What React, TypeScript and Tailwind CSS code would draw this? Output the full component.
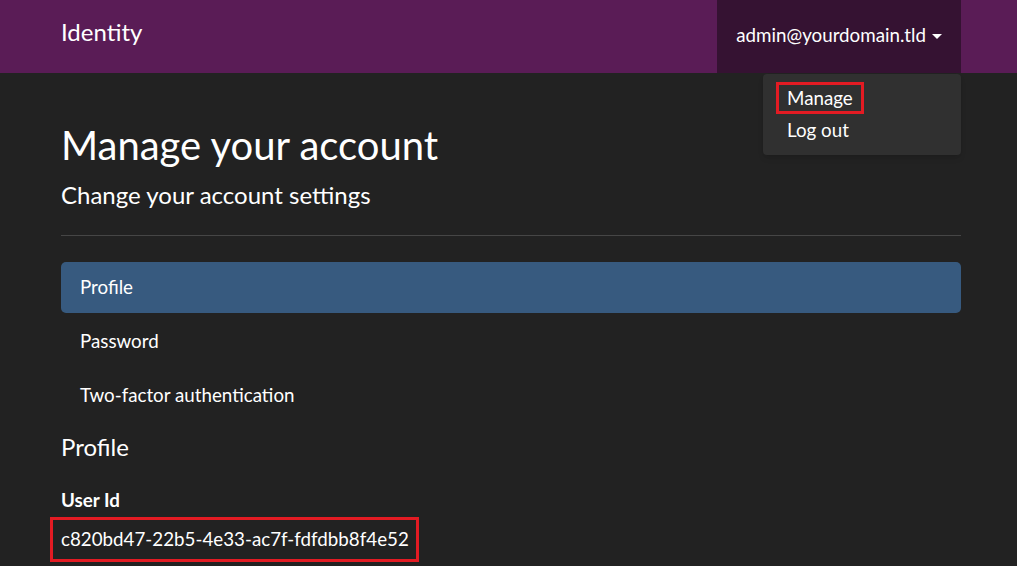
import React from "react";

export default function App() {
  return (
    <div className="min-h-[566px] bg-[#222222] text-white" style={{ fontFamily: "Lato, 'Noto Sans', sans-serif" }}>
      <nav className="h-[73px] bg-[#5a1c56] flex items-center relative">
        <div className="ml-[61px] w-[900px] flex items-center justify-between h-full">
          <span className="text-[24px] leading-none pb-[9px]">Identity</span>
          <div className="relative h-full">
            <div className="h-full bg-[#351232] flex items-center px-[19px] text-[18.75px] pb-[3px]">
              <span>admin@yourdomain.tld</span>
              <span className="ml-[6px] inline-block w-0 h-0 border-l-[5px] border-r-[5px] border-t-[5px] border-l-transparent border-r-transparent border-t-white mt-[2px]"></span>
            </div>
            <div className="absolute right-0 top-[74px] w-[198px] h-[81px] bg-[#303030] rounded-[4px] shadow-md pt-[8px] text-[18.75px]">
              <div className="ml-[13px] w-[88px] h-[32px] border-[3px] border-[#e31b23] flex items-center pl-[8px] leading-none">Manage</div>
              <div className="ml-[24px] mt-[4px] leading-[24px]">Log out</div>
            </div>
          </div>
        </div>
      </nav>
      <main className="ml-[61px] w-[900px]">
        <h1 className="text-[40px] leading-none mt-[52px]">Manage your account</h1>
        <h2 className="text-[24px] leading-none mt-[18px]">Change your account settings</h2>
        <hr className="border-0 border-t border-[#464646] mt-[28px]" />
        <ul className="mt-[26px] flex flex-col gap-[3px]">
          <li className="h-[51px] bg-[#375a7f] rounded-[5px] flex items-center px-[19px] text-[18.75px]">Profile</li>
          <li className="h-[51px] flex items-center px-[19px] text-[18.75px]">Password</li>
          <li className="h-[51px] flex items-center px-[19px] text-[18.75px]">Two-factor authentication</li>
        </ul>
        <h3 className="text-[24px] leading-none mt-[14px]">Profile</h3>
        <div className="text-[18.75px] font-bold leading-none mt-[32px]">User Id</div>
        <div className="-ml-[11px] mt-[7px] w-[369px] h-[45px] border-[3px] border-[#e31b23] flex items-center pl-[8px] text-[18.75px]">
          c820bd47-22b5-4e33-ac7f-fdfdbb8f4e52
        </div>
      </main>
    </div>
  );
}
